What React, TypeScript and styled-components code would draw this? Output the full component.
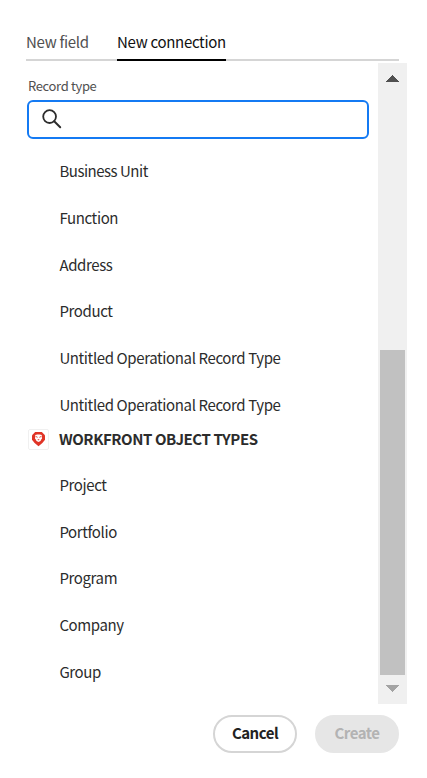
import React from "react";
import styled, { createGlobalStyle } from "styled-components";

const GlobalStyle = createGlobalStyle`
  * { box-sizing: border-box; }
  body {
    margin: 0;
    background: #fff;
    color: #2c2c2c;
    font-family: "Noto Sans CJK SC", "Open Sans", sans-serif;
    font-size: 15px;
  }
`;

const Dialog = styled.main`
  width: 427px;
  height: 778px;
  display: flex;
  flex-direction: column;
  overflow: hidden;
`;

const Tabs = styled.nav`
  display: flex;
  gap: 28px;
  height: 36px;
  margin: 25px 28px 0 26px;
  box-shadow: inset 0 -2px #d5d5d5;
`;

const Tab = styled.a<{ $active?: boolean; $width: number }>`
  width: ${(p) => p.$width}px;
  height: 36px;
  line-height: 34px;
  letter-spacing: -0.3px;
  white-space: nowrap;
  color: ${(p) => (p.$active ? "#111" : "#505050")};
  border-bottom: 2px solid ${(p) => (p.$active ? "#000" : "transparent")};
`;

const Body = styled.section`
  display: flex;
  justify-content: space-between;
  height: 641px;
  margin: 2px 20px 0 27px;
`;

const Content = styled.div`
  width: 342px;
`;

const FieldLabel = styled.label`
  display: block;
  height: 37px;
  padding: 12px 0 0 1px;
  font-size: 13px;
  line-height: 22px;
  letter-spacing: -0.35px;
  color: #505050;
`;

const SearchField = styled.div`
  display: flex;
  align-items: center;
  height: 39px;
  padding: 0 0 2px 13px;
  border: 2px solid #147af3;
  border-radius: 6px;
`;

const List = styled.ul<{ $offset: number }>`
  list-style: none;
  margin: ${(p) => p.$offset}px 0 0;
  padding: 0 0 0 32.4px;
`;

const Item = styled.li<{ $spacing?: number }>`
  height: 46.75px;
  line-height: 46.75px;
  white-space: nowrap;
  letter-spacing: ${(p) => p.$spacing ?? -0.38}px;
`;

const GroupHeading = styled.h2`
  display: flex;
  align-items: center;
  gap: 10px;
  height: 21px;
  margin: 0 0 0 1px;
  font-size: 15px;
  font-weight: 700;
  line-height: 20px;
  letter-spacing: -0.44px;
  white-space: nowrap;
`;

const AppBadge = styled.span`
  display: flex;
  align-items: center;
  justify-content: center;
  width: 21px;
  height: 21px;
  border: 1px solid #f0f0f0;
  border-radius: 2px;
`;

const Scrollbar = styled.div`
  display: flex;
  flex-direction: column;
  justify-content: space-between;
  align-items: flex-start;
  width: 29px;
  padding: 12px 0 12px 2px;
  background: #f0f0f0;
`;

const Thumb = styled.div`
  width: 25px;
  height: 325px;
  margin: auto 0 10px;
  background: #c1c1c1;
`;

const ArrowGlyph = styled.svg`
  display: block;
  margin-left: 6px;
`;

const Footer = styled.footer`
  display: flex;
  justify-content: flex-end;
  gap: 18px;
  margin: 11px 28px 0 0;
`;

const Button = styled.button<{ $muted?: boolean }>`
  width: 84px;
  height: 38px;
  padding: 0 0 2px;
  border: 2px solid ${(p) => (p.$muted ? "#e6e6e6" : "#d5d5d5")};
  border-radius: 19px;
  background: ${(p) => (p.$muted ? "#e6e6e6" : "#fff")};
  color: ${(p) => (p.$muted ? "#b3b3b3" : "#222")};
  font: 700 15px/32px "Noto Sans CJK SC", "Open Sans", sans-serif;
  letter-spacing: -0.5px;
`;

const recordTypes = [
  "Business Unit",
  "Function",
  "Address",
  "Product",
  "Untitled Operational Record Type",
  "Untitled Operational Record Type",
];

const objectTypes = ["Project", "Portfolio", "Program", "Company", "Group"];

const SearchIcon = () => (
  <svg width="20" height="20" viewBox="0 0 20 20" fill="none" stroke="#2c2c2c" strokeWidth="1.8">
    <circle cx="7.6" cy="7.6" r="6.4" />
    <path d="M12.2 12.2l6 6" strokeWidth="2" strokeLinecap="round" />
  </svg>
);

const LionIcon = () => (
  <svg width="15" height="16" viewBox="0 0 15 16">
    <path d="M4.200 1h6.600L14 4.300v4.400L11.400 12 7.500 15.300 3.600 12 1 8.700V4.300z" fill="#e03426" />
    <path d="M4.200 4l2.100-.4h2.400l2.100.4.100 3.300-1.400 2.700-2 1-2-1L4.100 7.300z" fill="#fff" />
    <path d="M4.600 5.400l2 .9M10.400 5.400l-2 .9" stroke="#e03426" strokeWidth="0.9" />
    <path d="M6.400 8.200h2.200L7.500 9.600z" fill="#e03426" />
  </svg>
);

const Arrow = ({ down }: { down?: boolean }) => (
  <ArrowGlyph width="13" height="7" viewBox="0 0 13 7" shapeRendering="crispEdges">
    <path d={down ? "M0 0h13L6.500 7z" : "M0 7h13L6.500 0z"} fill={down ? "#a3a3a3" : "#505050"} />
  </ArrowGlyph>
);

export default function App() {
  return (
    <>
      <GlobalStyle />
      <Dialog>
        <Tabs>
          <Tab $width={63}>New field</Tab>
          <Tab $width={109} $active>New connection</Tab>
        </Tabs>
        <Body>
          <Content>
            <FieldLabel>Record type</FieldLabel>
            <SearchField>
              <SearchIcon />
            </SearchField>
            <List $offset={9}>
              {recordTypes.map((name, i) => (
                <Item key={i} $spacing={i === 0 ? -0.48 : undefined}>{name}</Item>
              ))}
            </List>
            <GroupHeading>
              <AppBadge>
                <LionIcon />
              </AppBadge>
              WORKFRONT OBJECT TYPES
            </GroupHeading>
            <List $offset={12.25}>
              {objectTypes.map((name) => (
                <Item key={name}>{name}</Item>
              ))}
            </List>
          </Content>
          <Scrollbar>
            <Arrow />
            <Thumb />
            <Arrow down />
          </Scrollbar>
        </Body>
        <Footer>
          <Button>Cancel</Button>
          <Button $muted>Create</Button>
        </Footer>
      </Dialog>
    </>
  );
}
